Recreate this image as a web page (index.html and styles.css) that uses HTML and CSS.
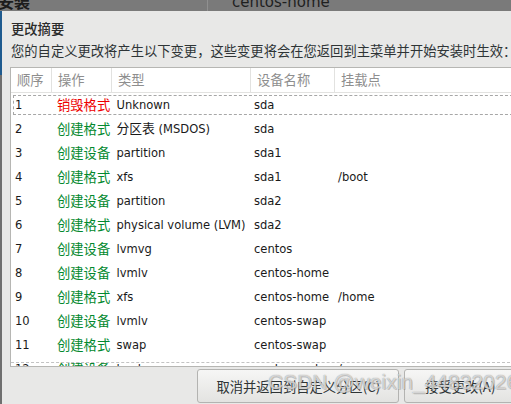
FILE: index.html
```html
<!DOCTYPE html>
<html lang="zh-CN">
<head>
<meta charset="utf-8">
<link rel="stylesheet" href="styles.css">
</head>
<body>
<div class="topbar">
  <span class="top-title">安装</span>
  <span class="top-sep"></span>
  <span class="top-host">centos-home</span>
</div>
<div class="main">
  <div class="edge"></div>
  <div class="dialog">
    <div class="title">更改摘要</div>
    <div class="subtitle">您的自定义更改将产生以下变更，这些变更将会在您返回到主菜单并开始安装时生效：</div>
    <div class="table">
      <div class="thead">
        <div class="th">顺序</div>
        <div class="th">操作</div>
        <div class="th">类型</div>
        <div class="th">设备名称</div>
        <div class="th">挂载点</div>
      </div>
      <div class="tbody">
        <div class="row focus"><span>1</span><span class="act red">销毁格式</span><span>Unknown</span><span>sda</span><span></span></div>
        <div class="row"><span>2</span><span class="act green">创建格式</span><span>分区表 (MSDOS)</span><span>sda</span><span></span></div>
        <div class="row"><span>3</span><span class="act green">创建设备</span><span>partition</span><span>sda1</span><span></span></div>
        <div class="row"><span>4</span><span class="act green">创建格式</span><span>xfs</span><span>sda1</span><span>/boot</span></div>
        <div class="row"><span>5</span><span class="act green">创建设备</span><span>partition</span><span>sda2</span><span></span></div>
        <div class="row"><span>6</span><span class="act green">创建格式</span><span>physical volume (LVM)</span><span>sda2</span><span></span></div>
        <div class="row"><span>7</span><span class="act green">创建设备</span><span>lvmvg</span><span>centos</span><span></span></div>
        <div class="row"><span>8</span><span class="act green">创建设备</span><span>lvmlv</span><span>centos-home</span><span></span></div>
        <div class="row"><span>9</span><span class="act green">创建格式</span><span>xfs</span><span>centos-home</span><span>/home</span></div>
        <div class="row"><span>10</span><span class="act green">创建设备</span><span>lvmlv</span><span>centos-swap</span><span></span></div>
        <div class="row"><span>11</span><span class="act green">创建格式</span><span>swap</span><span>centos-swap</span><span></span></div>
        <div class="row"><span>12</span><span class="act green">创建设备</span><span>lvmlv</span><span>centos-root</span><span>/</span></div>
      </div>
      <div class="undershoot"></div>
    </div>
    <div class="buttons">
      <button class="btn btn-cancel">取消并返回到自定义分区(C)</button>
      <button class="btn btn-accept">接受更改(A)</button>
    </div>
    <div class="watermark">CSDN @weixin_44832026</div>
  </div>
</div>
</body>
</html>
```
FILE: styles.css
```css
html, body {
  margin: 0;
  padding: 0;
}
body {
  width: 511px;
  height: 404px;
  overflow: hidden;
  background: #7b7b7b;
  font-family: "Noto Sans CJK SC", "Noto Sans", sans-serif;
  font-size: 13.3px;
  color: #2e3436;
  display: flex;
  flex-direction: column;
}
.topbar {
  height: 11px;
  flex: none;
  overflow: hidden;
  display: flex;
  background: #7a7a7a;
}
.top-title {
  display: block;
  margin-top: -7px;
  margin-left: -2px;
  font-size: 16px;
  line-height: 16px;
  font-weight: bold;
  color: #1c1c1c;
  width: 209px;
}
.top-sep {
  display: block;
  width: 1px;
  background: #909090;
}
.top-host {
  display: block;
  margin-top: -6px;
  margin-left: 24px;
  font-family: "DejaVu Sans", sans-serif;
  font-size: 15px;
  line-height: 16px;
  color: #1f1f1f;
}
.main {
  flex: 1;
  display: flex;
  min-height: 0;
}
.edge {
  width: 2px;
  flex: none;
  background: linear-gradient(#1f5b8f 0, #1f5b8f 64px, #6f6f6f 64px);
}
.dialog {
  flex: 1;
  position: relative;
  background: #e8e8e7;
  padding: 8px 5px 0 9px;
  display: flex;
  flex-direction: column;
}
.title {
  line-height: 20px;
  font-weight: 500;
  color: #2b2b2b;
}
.subtitle {
  margin-top: 2px;
  line-height: 20px;
  white-space: nowrap;
  color: #2e3436;
}
.table {
  position: relative;
  margin-top: 6px;
  margin-left: -1px;
  height: 298px;
  border: 1px solid #b6b6b3;
  background: #fff;
  display: flex;
  flex-direction: column;
  overflow: hidden;
}
.thead {
  flex: none;
  height: 24px;
  display: grid;
  grid-template-columns: 40px 60px 139px 84px 1fr;
  border-bottom: 1px solid #e2e2e0;
}
.th {
  padding-left: 6px;
  line-height: 24px;
  color: #8e8e8e;
  border-left: 1px solid #e2e2e0;
}
.th:first-child {
  border-left: none;
}
.tbody {
  flex: 1;
  overflow: hidden;
}
.row {
  height: 24px;
  display: grid;
  grid-template-columns: 42px 59.5px 137.5px 84px 1fr;
  line-height: 24px;
  color: #1a1a1a;
  font-family: "DejaVu Sans Condensed", "DejaVu Sans", "Noto Sans CJK SC", sans-serif;
  font-stretch: condensed;
  font-size: 12.8px;
}
.row span {
  padding-left: 4px;
  white-space: nowrap;
}
.row .act {
  font-family: "Noto Sans CJK SC", sans-serif;
  font-size: 13.3px;
}
.row.focus {
  outline: 1px dashed #a7a7a7;
  outline-offset: -3px;
}
.red {
  color: #ee0000;
}
.green {
  color: #03892e;
}
.undershoot {
  position: absolute;
  left: 0;
  right: 0;
  bottom: 3px;
  border-top: 1px dashed #c3c3c3;
}
.buttons {
  margin-top: 2px;
  display: flex;
  justify-content: flex-end;
  gap: 5px;
}
.btn {
  height: 34px;
  border: 1px solid #b3b3b1;
  border-radius: 3px;
  background: linear-gradient(#f6f6f5, #e3e3e1);
  font-family: inherit;
  font-size: 13.3px;
  color: #2e3436;
  padding: 0;
}
.btn-cancel {
  width: 202px;
}
.btn-accept {
  width: 112px;
}
.watermark {
  position: absolute;
  left: 266px;
  top: 359px;
  font-family: "Liberation Sans", sans-serif;
  font-size: 21px;
  color: rgba(255, 255, 255, 0.65);
  text-shadow: 0 0 1px rgba(80, 80, 80, 0.7), 1px 1px 0 rgba(140, 140, 140, 0.35);
  white-space: nowrap;
  pointer-events: none;
}
```
